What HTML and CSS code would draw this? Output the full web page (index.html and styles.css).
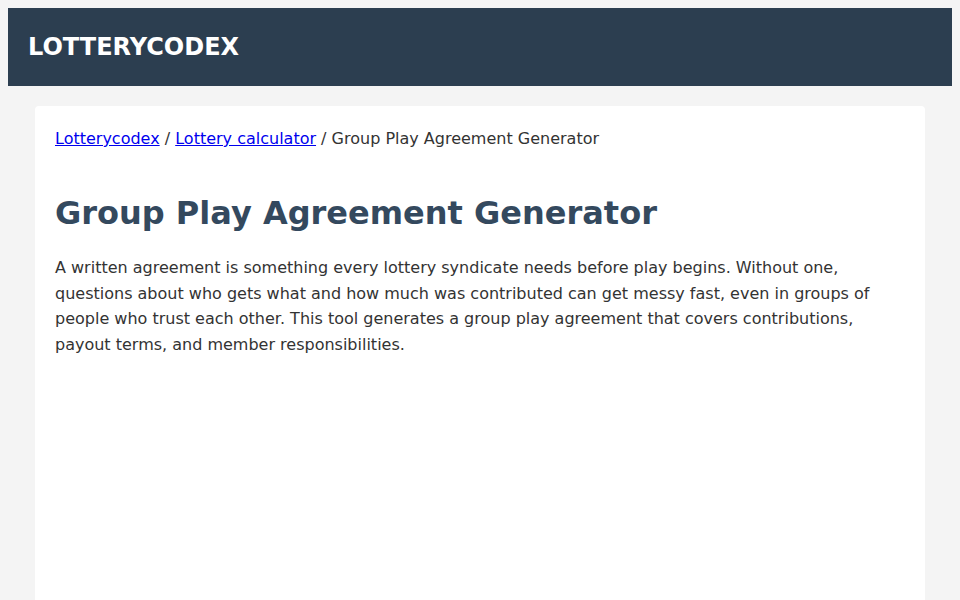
FILE: index.html
```html
<!DOCTYPE html>
<html lang="en">
<head>
<meta charset="utf-8">
<title>Group Play Agreement Generator</title>
<link rel="stylesheet" href="styles.css">
</head>
<body>
<header class="site-header">
  <div class="logo">LOTTERYCODEX</div>
</header>
<main class="card">
  <nav class="breadcrumb"><a href="#">Lotterycodex</a> / <a href="#">Lottery calculator</a> / Group Play Agreement Generator</nav>
  <h1 class="title">Group Play Agreement Generator</h1>
  <p class="intro">A written agreement is something every lottery syndicate needs before play begins. Without one, questions about who gets what and how much was contributed can get messy fast, even in groups of people who trust each other. This tool generates a group play agreement that covers contributions, payout terms, and member responsibilities.</p>
</main>
</body>
</html>
```
FILE: styles.css
```css
html, body {
  background: #f4f4f4;
}
body {
  margin: 8px;
  font-family: "DejaVu Sans", Verdana, sans-serif;
  font-size: 16px;
  line-height: 1.6;
  color: #333333;
}
.site-header {
  background: #2c3e50;
  padding: 20px;
  height: 38px;
}
.logo {
  color: #ffffff;
  font-weight: bold;
  font-size: 24px;
  line-height: 38px;
}
.card {
  display: block;
  background: #ffffff;
  width: 850px;
  margin: 20px auto 0;
  padding: 20px;
  min-height: 460px;
  border-radius: 4px;
}
.breadcrumb a {
  color: #0000ee;
}
.breadcrumb {
  margin-bottom: 42px;
}
.title {
  font-size: 32px;
  line-height: 1.2;
  color: #34495e;
  margin: 0 0 23px;
}
.intro {
  margin: 0;
}
```
